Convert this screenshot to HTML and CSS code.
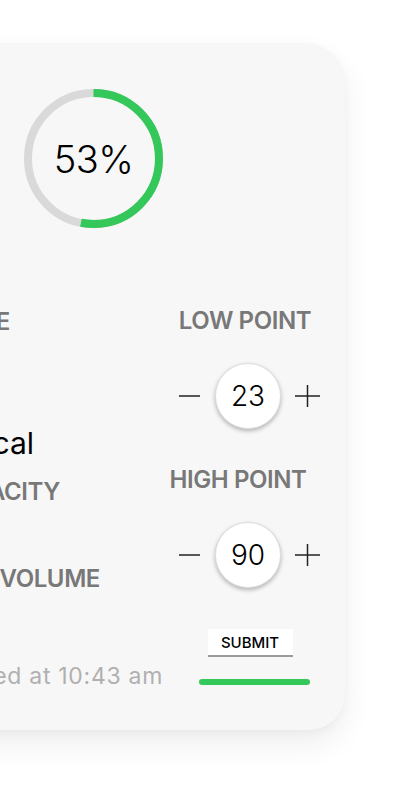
FILE: index.html
```html
<html>
  <head>
    <link rel="stylesheet" href="styles.css">
    <title>Tank level</title>
  </head>
  <body>
    <div id="tank_card">
      <div class="info">
        <div class="gauge">
          <svg width="139" height="139" viewBox="0 0 139 139">
            <circle cx="69.5" cy="69.5" r="65.5" fill="none" stroke="#d9d9d9" stroke-width="8"/>
            <circle cx="69.5" cy="69.5" r="65.5" fill="none" stroke="#34c759" stroke-width="8"
                    stroke-dasharray="218.1 411.5" transform="rotate(-90 69.5 69.5)"/>
          </svg>
          <div class="gauge-value">53%</div>
        </div>
        <div class="label mode">MODE</div>
        <div class="value mode-value">Typical</div>
        <div class="label capacity">CAPACITY</div>
        <div class="label volume">TANK VOLUME</div>
        <div class="updated">Last updated at 10:43 am</div>
      </div>
      <div class="points">
        <div class="label low">LOW POINT</div>
        <div class="stepper first">
          <svg class="minus" width="22" height="22" viewBox="0 0 22 22"><line x1="0" y1="11" x2="21" y2="11" stroke="#222" stroke-width="1.5"/></svg>
          <div class="knob">23</div>
          <svg class="plus" width="26" height="24" viewBox="0 0 26 24"><line x1="0" y1="12" x2="25" y2="12" stroke="#222" stroke-width="1.5"/><line x1="12.5" y1="1" x2="12.5" y2="23" stroke="#222" stroke-width="1.5"/></svg>
        </div>
        <div class="label high">HIGH POINT</div>
        <div class="stepper second">
          <svg class="minus" width="22" height="22" viewBox="0 0 22 22"><line x1="0" y1="11" x2="21" y2="11" stroke="#222" stroke-width="1.5"/></svg>
          <div class="knob">90</div>
          <svg class="plus" width="26" height="24" viewBox="0 0 26 24"><line x1="0" y1="12" x2="25" y2="12" stroke="#222" stroke-width="1.5"/><line x1="12.5" y1="1" x2="12.5" y2="23" stroke="#222" stroke-width="1.5"/></svg>
        </div>
        <button class="submit">SUBMIT</button>
        <div class="progress"></div>
      </div>
    </div>
  </body>
</html>
```
FILE: styles.css
```css
html, body {
  margin:      0;
  background:  #ffffff;
  color:       #000000;
  font-family: Inter, "Liberation Sans", sans-serif;
  overflow:    hidden;
}
div#tank_card {
  box-sizing:    border-box;
  width:         605px;
  height:        687px;
  margin-top:    43px;
  margin-left:   -260px;
  padding-right: 10px;
  display:       grid;
  grid-template-columns: 425px 1fr;
  background:    #f7f7f7;
  border-radius: 0 40px 36px 0;
  box-shadow:    0 14px 30px rgba(0, 0, 0, 0.07), 0 3px 8px rgba(0, 0, 0, 0.03);
}

/* left column */
.info {
  display:        flex;
  flex-direction: column;
  align-items:    flex-end;
  white-space:    nowrap;
}
.gauge {
  position:     relative;
  width:        139px;
  height:       139px;
  margin-top:   46px;
  margin-right: 2px;
}
.gauge svg { display: block; }
.gauge-value {
  position:    absolute;
  inset:       0;
  display:     flex;
  align-items: center;
  justify-content: center;
  font-size:   38px;
  font-weight: 300;
  letter-spacing: -0.5px;
}
.label {
  font-size:      24px;
  line-height:    24px;
  font-weight:    600;
  letter-spacing: -0.4px;
  color:          #787878;
}
.value {
  font-size:   30px;
  line-height: 30px;
  font-weight: 400;
}
.mode       { margin-top: 82px; margin-right: 155px; }
.mode-value { margin-top: 94px; margin-right: 131px; }
.capacity   { margin-top: 22px; margin-right: 105px; }
.volume     { margin-top: 63px; margin-right: 65px; }
.updated {
  margin-top:   74px;
  margin-right: 2px;
  font-size:    23px;
  line-height:  23px;
  color:        #b0b0b0;
  letter-spacing: 0.7px;
}

/* right column */
.points {
  display:        flex;
  flex-direction: column;
  align-items:    center;
  white-space:    nowrap;
}
.low  { margin-top: 266px; margin-right: 10px; }
.high { margin-top: 39px;  margin-right: 24px; }
.stepper {
  display:     flex;
  align-items: center;
  gap:         14px;
  margin-top:  30px;
}
.minus, .plus { display: block; }
.knob {
  box-sizing:    border-box;
  width:         66px;
  height:        66px;
  border-radius: 50%;
  background:    #ffffff;
  border:        1px solid #dedede;
  box-shadow:    0 2px 4px rgba(0, 0, 0, 0.28);
  display:       flex;
  align-items:   center;
  justify-content: center;
  font-size:     28px;
  font-weight:   300;
}
.submit {
  box-sizing:    border-box;
  width:         85px;
  height:        28px;
  margin-top:    41px;
  padding:       0;
  border:        none;
  border-bottom: 2px solid #9a9a9a;
  background:    #ffffff;
  font-family:   Inter, "Liberation Sans", sans-serif;
  font-size:     15px;
  font-weight:   500;
  color:         #000000;
}
.progress {
  width:         111px;
  height:        6px;
  margin-top:    22px;
  margin-left:   9px;
  border-radius: 3px;
  background:    #34c759;
}
```
